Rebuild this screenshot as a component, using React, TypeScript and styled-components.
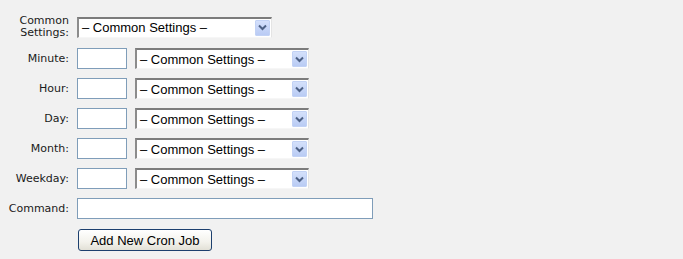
import { Fragment } from "react";
import styled, { createGlobalStyle } from "styled-components";

const GlobalStyle = createGlobalStyle`
  html, body {
    margin: 0;
    padding: 0;
    background: #f1f1f1;
  }
`;

const Form = styled.div`
  display: grid;
  grid-template-columns: 69px auto;
  column-gap: 8px;
  row-gap: 9px;
  padding-top: 15px;
  align-items: center;
  justify-items: start;
`;

const Label = styled.div<{ $tall?: boolean }>`
  justify-self: end;
  text-align: right;
  font-family: "DejaVu Sans", Verdana, sans-serif;
  font-size: 11px;
  line-height: ${(p) => (p.$tall ? "12px" : "21px")};
  color: #1a1a1a;
`;

const Controls = styled.div`
  display: flex;
  align-items: center;
  gap: 8px;
`;

const TextBox = styled.input<{ $width: number }>`
  box-sizing: border-box;
  width: ${(p) => p.$width}px;
  height: 21px;
  margin: 0;
  border: 1px solid #7f9db9;
  background: #fff;
  padding: 0 3px;
  font-family: "Liberation Sans", Arial, sans-serif;
  font-size: 13px;
  outline: none;
`;

const SelectBox = styled.div<{ $width: number }>`
  box-sizing: border-box;
  width: ${(p) => p.$width}px;
  height: 21px;
  display: flex;
  align-items: center;
  justify-content: space-between;
  background: #fff;
  border-top: 2px solid #7c7c7c;
  border-left: 2px solid #8c8c8c;
  border-right: 1px solid #e4e4e4;
  border-bottom: 1px solid #f6f6f6;
  padding: 0 1px 0 3px;
`;

const SelectText = styled.span`
  font-family: "Liberation Sans", Arial, sans-serif;
  font-size: 13px;
  color: #000;
  white-space: nowrap;
`;

const ArrowButton = styled.span`
  box-sizing: border-box;
  width: 15px;
  height: 16px;
  display: flex;
  align-items: center;
  justify-content: center;
  border: 1px solid #c2d2f5;
  border-radius: 1px;
  background: linear-gradient(#d4e0fb, #b9cbf4);
`;

const SubmitButton = styled.button`
  box-sizing: border-box;
  width: 134px;
  height: 22px;
  margin: 1px 0 0 1px;
  padding: 0;
  border: 1px solid #1c3f6e;
  border-radius: 3px;
  background: linear-gradient(#ffffff, #f3f2ec 60%, #e2e0d6);
  font-family: "Liberation Sans", Arial, sans-serif;
  font-size: 13px;
  color: #000;
`;

function Select({ width }: { width: number }) {
  return (
    <SelectBox $width={width}>
      <SelectText>– Common Settings –</SelectText>
      <ArrowButton>
        <svg width="9" height="7" viewBox="0 0 9 7">
          <path d="M1 1.5 L4.5 5 L8 1.5" fill="none" stroke="#4d6185" strokeWidth="2" />
        </svg>
      </ArrowButton>
    </SelectBox>
  );
}

const fields = ["Minute", "Hour", "Day", "Month", "Weekday"];

export default function App() {
  return (
    <>
      <GlobalStyle />
      <Form>
        <Label $tall>
          Common
          <br />
          Settings:
        </Label>
        <Select width={195} />
        {fields.map((f) => (
          <Fragment key={f}>
            <Label>{f}:</Label>
            <Controls>
              <TextBox $width={50} />
              <Select width={174} />
            </Controls>
          </Fragment>
        ))}
        <Label>Command:</Label>
        <TextBox $width={296} />
        <span />
        <SubmitButton>Add New Cron Job</SubmitButton>
      </Form>
    </>
  );
}
